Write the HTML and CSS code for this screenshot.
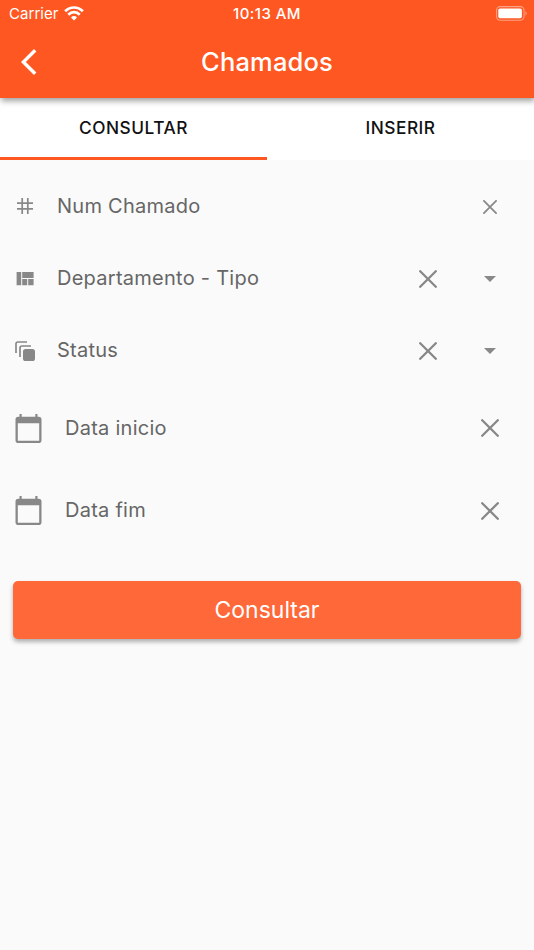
FILE: index.html
```html
<!DOCTYPE html>
<html lang="pt-BR">
<head>
<meta charset="utf-8">
<title>Chamados</title>
<link rel="stylesheet" href="styles.css">
</head>
<body>
<svg width="0" height="0" class="defs">
  <symbol id="cross" viewBox="0 0 18 18"><path d="M1.2 1.2L16.8 16.8M16.8 1.2L1.2 16.8" fill="none" stroke="currentColor" stroke-width="2.3" stroke-linecap="round"/></symbol>
  <symbol id="caret" viewBox="0 0 12 6"><path d="M0 0H12L6 6Z" fill="currentColor"/></symbol>
  <symbol id="calendar" viewBox="0 0 26 29"><path fill="currentColor" fill-rule="evenodd" d="M4 0H6.2V2.8H19.8V0H22V2.8H23.2Q26 2.8 26 5.6V26.2Q26 29 23.2 29H2.8Q0 29 0 26.2V5.6Q0 2.8 2.8 2.8H4ZM2.3 9.3V26.7H23.7V9.3Z"/></symbol>
</svg>
<header class="header">
  <div class="status-bar">
    <div class="carrier"><span class="carrier-name">Carrier</span>
      <svg class="wifi" viewBox="0 0 20 15" fill="none" stroke="#fff" stroke-width="2.7"><path d="M1.1 5.3Q5.1 1.5 10 1.5T18.9 5.3"/><path d="M4.3 8.8Q6.8 6.2 10 6.2T15.7 8.8"/><path d="M7 11.5Q8.2 10.1 10 10.1T13 11.5L10 14.4Z" fill="#fff" stroke="none"/></svg>
    </div>
    <span class="time">10:13 AM</span>
    <svg class="battery" viewBox="0 0 32 15"><rect x=".6" y=".6" width="27.4" height="13.6" rx="3.7" fill="none" stroke="#fff" stroke-opacity=".45" stroke-width="1.1"/><rect x="2.3" y="2.5" width="23.6" height="9.7" rx="1.8" fill="#fff"/><path d="M29.5 5Q32 7.4 29.5 9.8Z" fill="#fff" fill-opacity=".45"/></svg>
  </div>
  <div class="nav">
    <svg class="back" viewBox="0 0 16 26"><path d="M14.2 1.3L2.4 13L14.2 24.7" fill="none" stroke="#fff" stroke-width="3.4"/></svg>
    <h1 class="title">Chamados</h1>
  </div>
</header>
<nav class="tabs">
  <div class="tab active"><span>CONSULTAR</span></div>
  <div class="tab"><span>INSERIR</span></div>
</nav>
<main class="form">
  <div class="row">
    <span class="icon"><svg class="hash" width="18" height="18" viewBox="0 0 18 18"><path d="M6.2 1V17M11.8 1V17M1 6.2H17M1 11.8H17" fill="none" stroke="currentColor" stroke-width="1.7"/></svg></span>
    <span class="label">Num Chamado</span>
    <span class="action"><svg class="small-cross"><use href="#cross"/></svg></span>
  </div>
  <div class="row">
    <span class="icon"><svg width="18" height="14" viewBox="0 0 18 14" fill="currentColor"><path d="M.6 0H5.2V13.2H.6ZM6.2 0H17.6V6H6.2ZM6.2 7H11.2V13.2H6.2ZM12.2 7H17.6V13.2H12.2Z"/></svg></span>
    <span class="label">Departamento - Tipo</span>
    <span class="action"><svg class="cross"><use href="#cross"/></svg></span>
    <span class="action"><svg class="caret"><use href="#caret"/></svg></span>
  </div>
  <div class="row">
    <span class="icon"><svg width="20" height="20" viewBox="0 0 20 20"><path d="M1 12V3Q1 1 3 1H12M5 16V7Q5 5 7 5H16" fill="none" stroke="currentColor" stroke-width="1.7"/><rect x="8" y="8" width="12" height="12" rx="2.6" fill="currentColor"/></svg></span>
    <span class="label">Status</span>
    <span class="action"><svg class="cross"><use href="#cross"/></svg></span>
    <span class="action"><svg class="caret"><use href="#caret"/></svg></span>
  </div>
  <div class="row date">
    <svg class="calendar"><use href="#calendar"/></svg>
    <span class="label">Data inicio</span>
    <span class="action"><svg class="cross"><use href="#cross"/></svg></span>
  </div>
  <div class="row date">
    <svg class="calendar"><use href="#calendar"/></svg>
    <span class="label">Data fim</span>
    <span class="action"><svg class="cross"><use href="#cross"/></svg></span>
  </div>
  <button class="submit">Consultar</button>
</main>
</body>
</html>
```
FILE: styles.css
```css
* { box-sizing: border-box; }
body {
  margin: 0;
  min-height: 950px;
  background: #fafafa;
  font-family: Inter, "Liberation Sans", sans-serif;
}
svg { display: block; flex: none; }
.defs { position: absolute; }
span { white-space: nowrap; }
.header {
  position: relative;
  height: 98px;
  background: #ff5722;
  color: #fff;
  box-shadow: 1px 3px 6px rgba(0, 0, 0, .38);
}
.status-bar {
  display: grid;
  grid-template-columns: 1fr auto 1fr;
  align-items: center;
  height: 28px;
  padding: 0 6px 0 9px;
  font-size: 15px;
}
.carrier { display: flex; align-items: center; gap: 5px; }
.carrier-name { margin-top: -1px; letter-spacing: .05px; }
.wifi { width: 20px; height: 15px; margin-top: -2px; }
.time {
  margin: -1px 3px 0 0;
  font-weight: 500;
  font-size: 15px;
  letter-spacing: .45px;
}
.battery { width: 32px; height: 15px; justify-self: end; margin-top: -1px; }
.nav {
  display: grid;
  grid-template-columns: 60px 1fr 60px;
  align-items: center;
  height: 68px;
}
.back { width: 16px; height: 26px; margin-left: 21px; }
.title {
  margin: -1px 0 0;
  text-align: center;
  font-size: 25.5px;
  font-weight: 500;
  letter-spacing: .15px;
}
.tabs {
  display: flex;
  height: 62px;
  background: #fff;
}
.tab {
  flex: 1;
  display: flex;
  justify-content: center;
  align-items: center;
  padding-bottom: 1px;
  border-bottom: 3px solid transparent;
  font-size: 17.3px;
  font-weight: 450;
  letter-spacing: .5px;
  color: #111;
}
.tab.active { border-color: #ff5722; }
.form { padding: 10px 13px 0; }
.row {
  display: flex;
  align-items: center;
  height: 72px;
  padding-top: 1px;
  color: #888;
}
.icon { display: flex; justify-content: center; width: 24px; margin-right: 20px; }
.hash { margin-top: -1px; }
.label {
  flex: 1;
  margin-top: -1px;
  font-size: 20px;
  letter-spacing: .26px;
  color: #666;
}
.action { display: flex; justify-content: center; width: 62px; }
.cross { width: 18px; height: 18px; }
.small-cross { width: 14px; height: 14px; }
.caret { width: 12px; height: 6px; }
.row.date { height: 82.5px; padding-top: 2px; padding-left: 2px; }
.calendar { width: 27px; height: 29px; margin-right: 23px; }
.submit {
  display: block;
  width: 508px;
  height: 58px;
  margin-top: 30px;
  padding: 0;
  border: 0;
  border-radius: 5px;
  background: #ff6838;
  box-shadow: 0 3px 4px rgba(0, 0, 0, .3);
  color: #fff;
  font: 400 23px Inter, "Liberation Sans", sans-serif;
}
```
